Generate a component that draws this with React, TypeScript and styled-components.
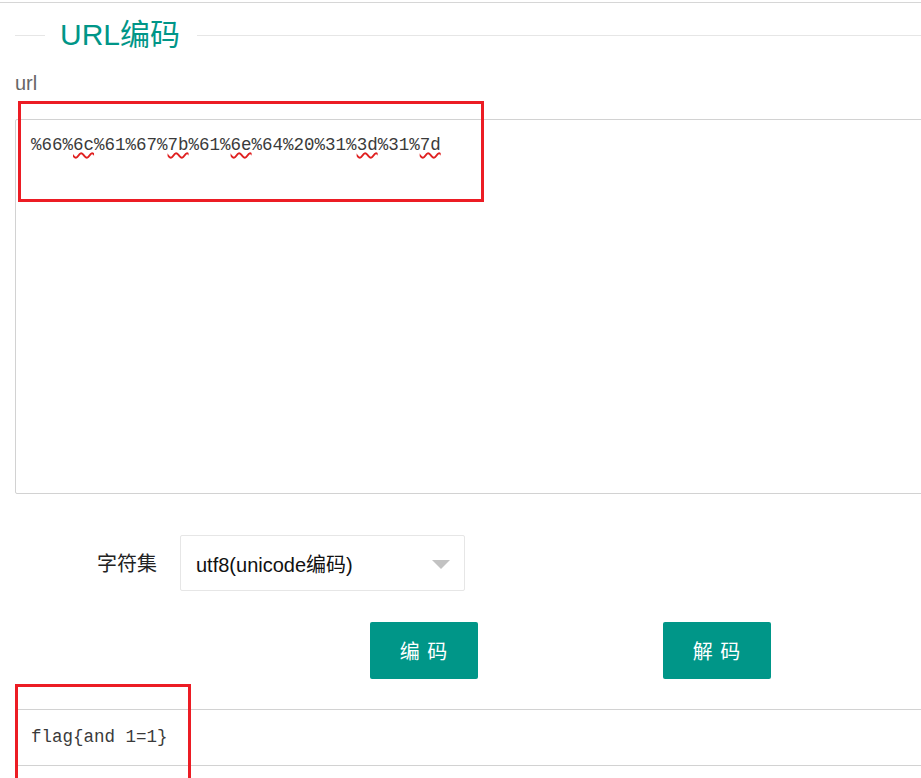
import styled, { createGlobalStyle } from 'styled-components';

const GlobalStyle = createGlobalStyle`
  html, body {
    margin: 0;
    padding: 0;
    background: #fff;
    overflow: hidden;
  }
  body {
    font-family: "Liberation Sans", "Noto Sans CJK SC", sans-serif;
    color: #333;
  }
`;

const TEAL = '#009688';
const MARK = '#ec1c24';

// ========================
// Layout
// ========================

const Page = styled.div`
  width: 921px;
  height: 778px;
  overflow: hidden;
  border-top: 1px solid #d6d6d6;
  margin-top: 2px;
`;

const Body = styled.div`
  padding-left: 15px;
`;

const FieldTitle = styled.div`
  display: flex;
  align-items: center;
  height: 30px;
  margin-top: 17px;
`;

const TitleRule = styled.div<{ $grow?: boolean }>`
  height: 1px;
  background: #e6e6e6;
  width: ${({ $grow }) => ($grow ? 'auto' : '30px')};
  flex: ${({ $grow }) => ($grow ? '1' : '0 0 auto')};
`;

const TitleText = styled.h2`
  margin: 0;
  padding: 0 17px 0 15px;
  font-size: 30px;
  font-weight: 400;
  color: ${TEAL};
  line-height: 30px;
`;

const FieldLabel = styled.div`
  margin-top: 22px;
  font-size: 20px;
  line-height: 22px;
  color: #666;
`;

const CodeBox = styled.div<{ $height: number }>`
  position: relative;
  box-sizing: border-box;
  width: 940px;
  height: ${({ $height }) => $height}px;
  border: 1px solid #d2d2d2;
  border-radius: 2px;
  padding: 13px 15px;
  font-family: "Liberation Mono", "DejaVu Sans Mono", monospace;
  font-size: 17.5px;
  line-height: 24px;
  color: #3a3a3a;
  white-space: pre;
`;

const InputBox = styled(CodeBox)`
  margin-top: 25px;
`;

const Typo = styled.span`
  text-decoration: underline wavy #e02020;
  text-decoration-thickness: 1.5px;
  text-underline-offset: 2px;
`;

const Annotation = styled.div<{ $top: number; $left: number; $w: number; $h: number }>`
  position: absolute;
  top: ${({ $top }) => $top}px;
  left: ${({ $left }) => $left}px;
  width: ${({ $w }) => $w}px;
  height: ${({ $h }) => $h}px;
  box-sizing: border-box;
  border: 3px solid ${MARK};
  pointer-events: none;
`;

const FormRow = styled.div`
  display: grid;
  grid-template-columns: 142px 285px;
  column-gap: 23px;
  align-items: center;
  margin-top: 41px;
`;

const RowLabel = styled.label`
  text-align: right;
  font-size: 20px;
  color: #222;
  padding-bottom: 2px;
`;

const Select = styled.div`
  box-sizing: border-box;
  height: 56px;
  border: 1px solid #e6e6e6;
  border-radius: 2px;
  display: flex;
  align-items: center;
  justify-content: space-between;
  padding: 0 14px 0 15px;
  font-size: 20px;
  color: #111;
`;

const Caret = styled.span`
  width: 0;
  height: 0;
  border-left: 9px solid transparent;
  border-right: 9px solid transparent;
  border-top: 9px solid #c2c2c2;
  margin-top: 2px;
`;

const ButtonRow = styled.div`
  display: flex;
  gap: 185px;
  margin: 31px 0 0 355px;
`;

const Button = styled.button`
  width: 108px;
  height: 57px;
  border: none;
  border-radius: 2px;
  background: ${TEAL};
  color: #fff;
  font-family: "Liberation Sans", "Noto Sans CJK SC", sans-serif;
  font-size: 20px;
  padding: 0;
  white-space: pre;
  letter-spacing: 1px;
`;

const ResultBox = styled.div`
  position: relative;
  box-sizing: border-box;
  margin-top: 30px;
  width: 940px;
  height: 57px;
  border-top: 1px solid #d2d2d2;
  border-bottom: 1px solid #d2d2d2;
  padding: 15px 16px;
  font-family: "Liberation Mono", "DejaVu Sans Mono", monospace;
  font-size: 17.5px;
  line-height: 24px;
  color: #3a3a3a;
  white-space: pre;
`;

// ========================
// Component
// ========================

const encoded: Array<[string, boolean]> = [
  ['%66%', false],
  ['6c', true],
  ['%61%67%', false],
  ['7b', true],
  ['%61%', false],
  ['6e', true],
  ['%64%20%31%', false],
  ['3d', true],
  ['%31%', false],
  ['7d', true],
];

const App = () => {
  return (
    <Page>
      <GlobalStyle />
      <Body>
        <FieldTitle>
          <TitleRule />
          <TitleText>URL编码</TitleText>
          <TitleRule $grow />
        </FieldTitle>

        <FieldLabel>url</FieldLabel>

        <InputBox $height={375}>
          {encoded.map(([part, typo], i) =>
            typo ? <Typo key={i}>{part}</Typo> : <span key={i}>{part}</span>
          )}
          <Annotation $top={-19} $left={2} $w={466} $h={101} />
        </InputBox>

        <FormRow>
          <RowLabel>字符集</RowLabel>
          <Select>
            <span>utf8(unicode编码)</span>
            <Caret />
          </Select>
        </FormRow>

        <ButtonRow>
          <Button>编 码</Button>
          <Button>解 码</Button>
        </ButtonRow>

        <ResultBox>
          flag{'{'}and 1=1{'}'}
          <Annotation $top={-26} $left={0} $w={176} $h={120} />
        </ResultBox>
      </Body>
    </Page>
  );
};

export default App;
